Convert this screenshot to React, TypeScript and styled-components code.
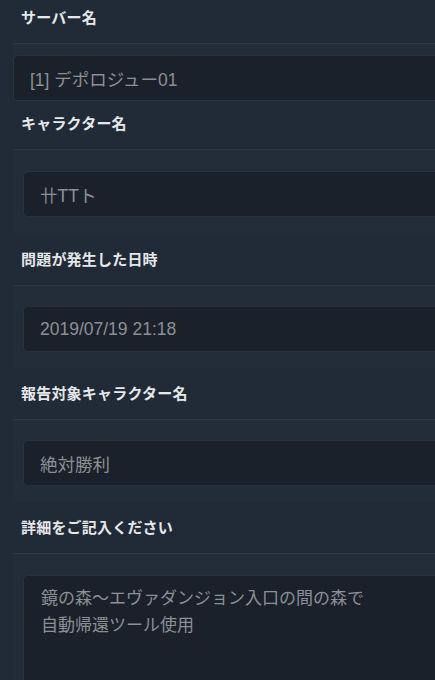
import React from "react";
import styled, { createGlobalStyle } from "styled-components";

const Global = createGlobalStyle`
  html, body {
    margin: 0;
    padding: 0;
    background: #212b37;
  }
  body {
    font-family: "Liberation Sans", "Noto Sans CJK JP", sans-serif;
  }
`;

const Page = styled.div`
  width: 435px;
  height: 680px;
  overflow: hidden;
  background: #212b37;
  padding-left: 13px;
  box-sizing: border-box;
`;

const Header = styled.div<{ $padTop: number }>`
  padding: ${(p) => p.$padTop}px 0 15px 8px;
  border-bottom: 1px solid #2c3744;
  font-size: 15px;
  line-height: 20px;
  font-weight: 700;
  color: #e6e7e8;
  letter-spacing: 0.2px;
`;

const Body = styled.div<{ $top: number; $bottom: number; $inset: number }>`
  padding: ${(p) => p.$top}px 0 ${(p) => p.$bottom}px ${(p) => p.$inset}px;
  background: #222d39;
`;

const Box = styled.div`
  width: 460px;
  box-sizing: border-box;
  background: #1b212a;
  border: 1px solid #29323d;
  border-radius: 5px;
  color: #8c9096;
  font-size: 17.5px;
  padding: 0 16px;
`;

const Input = styled(Box)`
  height: 46px;
  display: flex;
  align-items: center;
`;

const TextArea = styled(Box)`
  height: 160px;
  padding-top: 9px;
  font-size: 17px;
  line-height: 27px;
  padding-left: 17px;
`;

const fields = [
  { label: "サーバー名", value: "[1] デポロジュー01", padTop: 8, top: 11, bottom: 0, inset: 0 },
  { label: "キャラクター名", value: "卄TTト", padTop: 13, top: 21, bottom: 16, inset: 10 },
  { label: "問題が発生した日時", value: "2019/07/19 21:18", padTop: 17, top: 20, bottom: 16, inset: 10 },
  { label: "報告対象キャラクター名", value: "絶対勝利", padTop: 16, top: 20, bottom: 16, inset: 10 },
];

export default function App() {
  return (
    <>
      <Global />
      <Page>
        {fields.map((f) => (
          <section key={f.label}>
            <Header $padTop={f.padTop}>{f.label}</Header>
            <Body $top={f.top} $bottom={f.bottom} $inset={f.inset}>
              <Input>{f.value}</Input>
            </Body>
          </section>
        ))}
        <section>
          <Header $padTop={16}>詳細をご記入ください</Header>
          <Body $top={21} $bottom={0} $inset={10}>
            <TextArea>
              鏡の森〜エヴァダンジョン入口の間の森で
              <br />
              自動帰還ツール使用
            </TextArea>
          </Body>
        </section>
      </Page>
    </>
  );
}
